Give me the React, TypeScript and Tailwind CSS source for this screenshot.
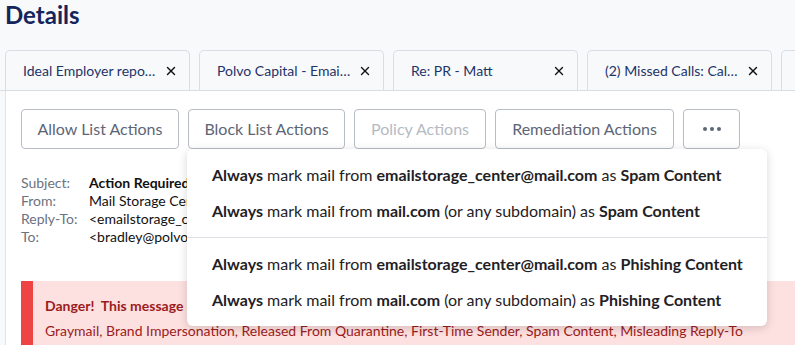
import { X } from 'lucide-react'

const TABS = [
  'Ideal Employer report for Q3',
  'Polvo Capital - Email Security',
  'Re: PR - Matt',
  '(2) Missed Calls: Call from 555',
  'Invoice',
]

const FIELDS = [
  { label: 'Subject:', value: 'Action Required: Your mailbox storage is full', bold: true },
  { label: 'From:', value: 'Mail Storage Center <emailstorage_center@mail.com>' },
  { label: 'Reply-To:', value: '<emailstorage_center@mail.com>' },
  { label: 'To:', value: '<bradley@polvocapital.com>' },
]

const MENU = [
  [
    { from: 'emailstorage_center@mail.com', sub: false, kind: 'Spam Content' },
    { from: 'mail.com', sub: true, kind: 'Spam Content' },
  ],
  [
    { from: 'emailstorage_center@mail.com', sub: false, kind: 'Phishing Content' },
    { from: 'mail.com', sub: true, kind: 'Phishing Content' },
  ],
]

function Tab({ title }: { title: string }) {
  return (
    <div className="w-[185px] h-[40px] shrink-0 flex items-center pl-[17px] pr-[11px] gap-[6px] border border-b-0 border-[#d8dde6] rounded-t-[5px] bg-[#f8f9fb]">
      <span className="flex-1 min-w-0 truncate text-[14px] text-[#1d3468]">{title}</span>
      <X size={14} strokeWidth={2.4} className="text-[#111] shrink-0" />
    </div>
  )
}

function ActionButton({ label, disabled, w }: { label: string; disabled?: boolean; w: string }) {
  return (
    <button
      className={`${w} h-[40px] shrink-0 rounded-[4px] border border-[#b7bcc5] bg-white text-[16px] ${
        disabled ? 'text-[#b5bac3]' : 'text-[#5d6677]'
      }`}
    >
      {label}
    </button>
  )
}

export default function App() {
  return (
    <div className="w-[795px] h-[345px] overflow-hidden bg-[#f8f9fb] font-['Lato',sans-serif]">
      <h1 className="pl-[5px] h-[32px] leading-[30px] text-[24px] font-bold text-[#15255c]">Details</h1>

      <div className="mt-[18px] pl-[5px] flex gap-[9px] border-b border-[#d8dde6]">
        {TABS.map(t => (
          <Tab key={t} title={t} />
        ))}
      </div>

      <div className="ml-[5px] bg-white border-l border-[#dfe3ea] h-[260px] pl-[15px] pt-[18px]">
        <div className="relative flex gap-[9px]">
          <ActionButton w="w-[158px]" label="Allow List Actions" />
          <ActionButton w="w-[157px]" label="Block List Actions" />
          <ActionButton w="w-[132px]" label="Policy Actions" disabled />
          <ActionButton w="w-[179px]" label="Remediation Actions" />
          <button className="w-[57px] h-[40px] shrink-0 rounded-[4px] border border-[#b7bcc5] bg-white flex items-center justify-center gap-[3px]">
            <span className="w-[4px] h-[4px] rounded-full bg-[#5d6677]" />
            <span className="w-[4px] h-[4px] rounded-full bg-[#5d6677]" />
            <span className="w-[4px] h-[4px] rounded-full bg-[#5d6677]" />
          </button>

          {/* More actions menu */}
          <div className="absolute top-full left-[166px] z-10 w-[580px] py-[8px] bg-white rounded-[6px] shadow-[0_2px_10px_rgba(0,0,0,0.16)] text-[16px] text-[#1f2125]">
            {MENU.map((group, gi) => (
              <div key={gi} className={gi > 0 ? 'border-t border-[#dcdfe4] mt-[8px] pt-[8px]' : ''}>
                {group.map((item, i) => (
                  <div key={i} className="h-[36px] flex items-center pl-[25px] whitespace-nowrap">
                    <span>
                      <b>Always</b> mark mail from <b>{item.from}</b>
                      {item.sub && ' (or any subdomain)'} as <b>{item.kind}</b>
                    </span>
                  </div>
                ))}
              </div>
            ))}
          </div>
        </div>

        <div className="mt-[24px] flex flex-col text-[14px]">
          {FIELDS.map(f => (
            <div key={f.label} className="h-[18px] flex items-center whitespace-nowrap">
              <span className="w-[68px] shrink-0 text-[#6b7280]">{f.label}</span>
              <span className={f.bold ? 'font-bold text-[#111]' : 'text-[#111]'}>{f.value}</span>
            </div>
          ))}
        </div>

        <div className="mt-[36px] flex bg-[#fde0e0] h-[80px]">
          <div className="w-[12px] bg-[#ef4444] shrink-0" />
          <div className="pl-[12px] pt-[16px] text-[#9b1c1c] whitespace-nowrap">
            <p className="text-[14px] font-bold leading-[18px]">
              Danger!&nbsp; This message has been flagged as potentially malicious
            </p>
            <p className="mt-[7px] text-[14px] leading-[18px]">
              Graymail, Brand Impersonation, Released From Quarantine, First-Time Sender, Spam Content, Misleading Reply-To
            </p>
          </div>
        </div>
      </div>
    </div>
  )
}
